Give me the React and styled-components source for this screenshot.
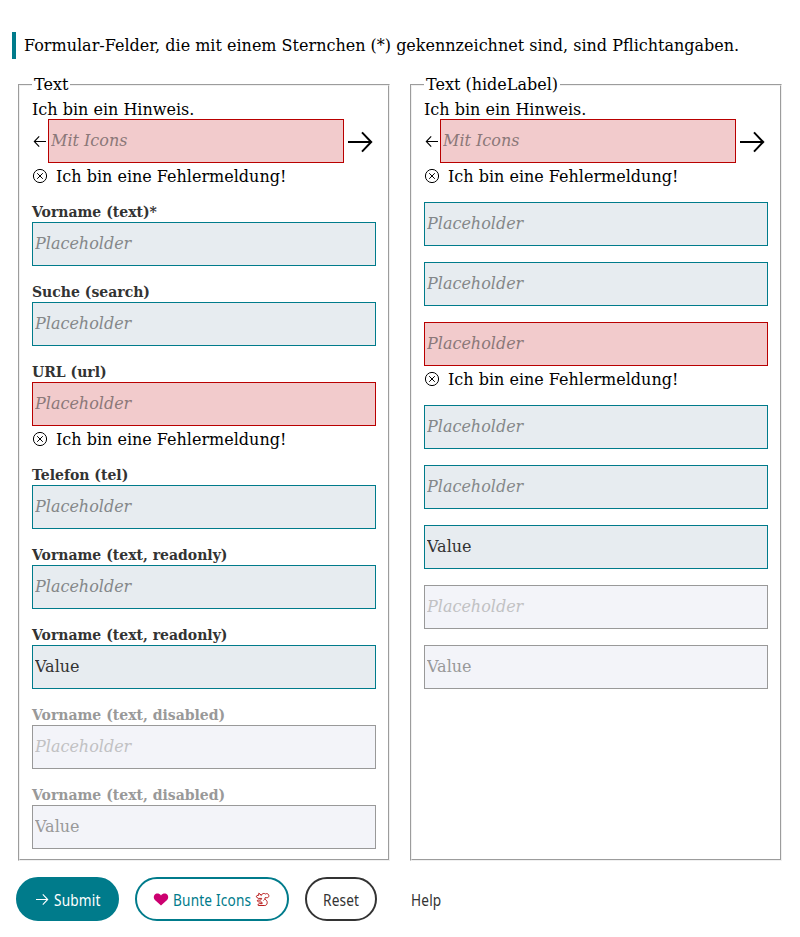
import React from "react";
import styled, { createGlobalStyle, css } from "styled-components";

const petrol = "#007b8b";
const ink = "#333";

const GlobalStyle = createGlobalStyle`
  *, *::before, *::after { box-sizing: border-box; }
  body {
    margin: 0;
    background: #fff;
    color: #000;
    font-family: "DejaVu Serif", serif;
    font-size: 16px;
    line-height: 19px;
  }
`;

const Page = styled.main`
  padding: 32px 16px 16px;
`;

const Notice = styled.p`
  margin: 0 0 16px -4px;
  height: 27px;
  padding-left: 8px;
  border-left: 4px solid ${petrol};
  line-height: 27px;
  white-space: nowrap;
`;

const Columns = styled.div`
  display: grid;
  grid-template-columns: 1fr 1fr;
  gap: 16px;
`;

const Group = styled.fieldset`
  min-width: 0;
  margin: 0 2px;
  padding: 6px 12px 10px;
  border: 2px groove rgb(240, 240, 240);
`;

const Legend = styled.legend`
  padding: 0 2px;
  height: 19px;
`;

const Field = styled.div`
  display: flex;
  flex-direction: column;
  & + & { margin-top: 16px; }
`;

const Label = styled.label`
  height: 20px;
  line-height: 20px;
  font-size: 14px;
  font-weight: 700;
  color: ${(p) => (p.$disabled ? "#999" : ink)};
`;

const Hint = styled.span`
  height: 19px;
`;

const ErrorLine = styled.div`
  display: flex;
  gap: 8px;
  height: 23px;
  padding-top: 4px;
`;

const ControlRow = styled.div`
  display: flex;
  align-items: center;
`;

const tones = {
  normal: css`
    background: #e7ecf0;
    border-color: ${petrol};
  `,
  error: css`
    background: #f2cbcc;
    border-color: #b90000;
  `,
  disabled: css`
    background: #f3f4f9;
    border-color: #999;
  `,
};

const Input = styled.input`
  flex: 1 1 0;
  min-width: 0;
  height: 44px;
  margin: 0;
  padding: 0 2px 2px;
  border: 1px solid;
  border-radius: 0;
  outline: 0;
  font: inherit;
  color: ${(p) => (p.$tone === "disabled" ? "#999" : ink)};
  ${(p) => tones[p.$tone]}
  &::placeholder {
    font-style: italic;
    opacity: 1;
    color: ${(p) => ({ normal: "#848789", error: "#8b7879", disabled: "#c1c1c3" })[p.$tone]};
  }
`;

const IconSlot = styled.span`
  display: flex;
  justify-content: center;
  flex: none;
  width: ${(p) => p.$width}px;
  padding-top: ${(p) => p.$drop || 0}px;
`;

const Actions = styled.div`
  display: flex;
  gap: 16px;
  margin-top: 16px;
`;

const buttonLooks = {
  primary: css`
    width: 103px;
    background: ${petrol};
    border-color: ${petrol};
    color: #fff;
  `,
  secondary: css`
    width: 154px;
    border-color: ${petrol};
    color: ${petrol};
  `,
  normal: css`
    width: 72px;
    border-color: ${ink};
    color: ${ink};
  `,
  ghost: css`
    width: 67px;
    border-color: transparent;
    color: ${ink};
  `,
};

const Button = styled.button`
  display: flex;
  align-items: center;
  justify-content: center;
  gap: 4px;
  height: 44px;
  padding: 0;
  border: 2px solid;
  border-radius: 22px;
  background: transparent;
  font: 15.5px/20px "Noto Sans", sans-serif;
  white-space: nowrap;
  ${(p) => buttonLooks[p.$look]}
`;

/* Narrowed lettering: the box keeps the width of the scaled text. */
const ButtonText = styled.span`
  width: ${(p) => p.$width}px;
  padding-top: 1px;
  text-align: left;
  letter-spacing: 0.2px;
  transform: scaleX(0.88);
  transform-origin: left;
`;

const Svg = styled.svg`
  display: block;
  flex: none;
  fill: none;
  stroke: currentColor;
`;

const ArrowLeft = () => (
  <Svg width="16" height="16" viewBox="0 0 16 16">
    <path d="M7.2 3.3 2.3 8.5l4.9 5.2M2.3 8.5H14" strokeWidth="1.1" />
  </Svg>
);

const ArrowRight = () => (
  <Svg width="16" height="16" viewBox="0 0 16 16">
    <path d="m8.8 3.3 4.9 5.2-4.9 5.2M13.7 8.5H2" strokeWidth="1.1" />
  </Svg>
);

const LargeArrowRight = () => (
  <Svg width="32" height="32" viewBox="0 0 32 32">
    <path d="M18 6.4 27.2 16 18 25.6M27.2 16H4" strokeWidth="2" />
  </Svg>
);

const CircleX = () => (
  <Svg width="16" height="16" viewBox="0 0 16 16">
    <circle cx="8" cy="9" r="6.6" strokeWidth="1" />
    <path d="m5.2 6.2 5.6 5.6m0-5.6-5.6 5.6" strokeWidth="1" />
  </Svg>
);

const Heart = () => (
  <Svg width="16" height="16" viewBox="0 0 16 16">
    <path
      fill="#cc0070"
      stroke="none"
      d="M8 14.6 1.9 9C.5 7.5.4 5.2 1.6 3.7 3.1 2 6.3 2 8 4.4c1.7-2.4 4.9-2.4 6.4-.7 1.2 1.5 1.1 3.8-.3 5.3Z"
    />
  </Svg>
);

const Squirrel = () => (
  <Svg width="16" height="16" viewBox="0 0 16 16" color="#b91c1c">
    <path
      strokeWidth="1"
      strokeLinejoin="round"
      d="M3.6 4.4 3.8 2.2l2.4 1.9C7.4 2.4 9 1.9 10.4 3c1.3-.9 3-.3 3.4 1.4.3 1.5-.8 2.5-2.1 2.3l-1.4-.2-.5 1.7c1.7.8 2.5 2 2.4 3.5-.1 1.7-1 2.8-2.4 2.8H3.3l-.4-1 1.6-.9 2.7.1-.5-1.7H3.8L2.1 9.8l.7-.8 2.8.2 1.1-1.8H3.3L1.2 5.8l.8-1.4Z"
    />
    <path strokeWidth="0.8" d="M6.2 4.1v1M9.8 8.2 8.3 9.6" />
  </Svg>
);

const ErrorMessage = () => (
  <ErrorLine>
    <CircleX />
    <span>Ich bin eine Fehlermeldung!</span>
  </ErrorLine>
);

const fields = [
  { label: "Vorname (text)*", type: "text" },
  { label: "Suche (search)", type: "search" },
  { label: "URL (url)", type: "url", tone: "error" },
  { label: "Telefon (tel)", type: "tel" },
  { label: "Vorname (text, readonly)", type: "text", readOnly: true },
  { label: "Vorname (text, readonly)", type: "text", readOnly: true, value: "Value" },
  { label: "Vorname (text, disabled)", type: "text", tone: "disabled" },
  { label: "Vorname (text, disabled)", type: "text", tone: "disabled", value: "Value" },
];

function TextGroup({ title, hideLabel }) {
  return (
    <Group>
      <Legend>{title}</Legend>
      <Field>
        <Hint>Ich bin ein Hinweis.</Hint>
        <ControlRow>
          <IconSlot $width={16}>
            <ArrowLeft />
          </IconSlot>
          <Input $tone="error" placeholder="Mit Icons" aria-label="Mit Icons" />
          <IconSlot $width={32} $drop={2}>
            <LargeArrowRight />
          </IconSlot>
        </ControlRow>
        <ErrorMessage />
      </Field>
      {fields.map(({ label, type, tone = "normal", readOnly, value }, i) => (
        <Field key={i}>
          {!hideLabel && (
            <Label htmlFor={`${title}-${i}`} $disabled={tone === "disabled"}>
              {label}
            </Label>
          )}
          <ControlRow>
            <Input
              id={`${title}-${i}`}
              aria-label={label}
              type={type}
              $tone={tone}
              disabled={tone === "disabled"}
              readOnly={readOnly}
              defaultValue={value}
              placeholder="Placeholder"
            />
          </ControlRow>
          {tone === "error" && <ErrorMessage />}
        </Field>
      ))}
    </Group>
  );
}

export default function App() {
  return (
    <>
      <GlobalStyle />
      <Page>
        <Notice>
          Formular-Felder, die mit einem Sternchen (*) gekennzeichnet sind, sind Pflichtangaben.
        </Notice>
        <Columns>
          <TextGroup title="Text" />
          <TextGroup title="Text (hideLabel)" hideLabel />
        </Columns>
        <Actions>
          <Button $look="primary">
            <ArrowRight />
            <ButtonText $width={47}>Submit</ButtonText>
          </Button>
          <Button $look="secondary">
            <Heart />
            <ButtonText $width={78}>Bunte Icons</ButtonText>
            <Squirrel />
          </Button>
          <Button $look="normal">
            <ButtonText $width={37}>Reset</ButtonText>
          </Button>
          <Button $look="ghost">
            <ButtonText $width={32}>Help</ButtonText>
          </Button>
        </Actions>
      </Page>
    </>
  );
}
